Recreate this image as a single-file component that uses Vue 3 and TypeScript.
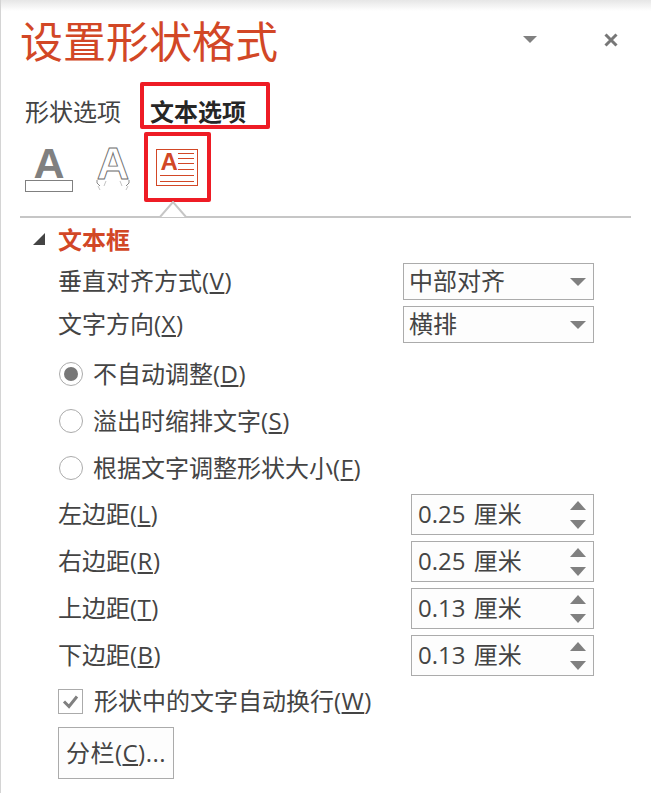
<script setup lang="ts">
const selects = [
  { label: '垂直对齐方式', key: 'V', value: '中部对齐' },
  { label: '文字方向', key: 'X', value: '横排' }
]

const radios = [
  { label: '不自动调整', key: 'D', checked: true },
  { label: '溢出时缩排文字', key: 'S', checked: false },
  { label: '根据文字调整形状大小', key: 'F', checked: false }
]

const spinners = [
  { label: '左边距', key: 'L', value: '0.25 厘米' },
  { label: '右边距', key: 'R', value: '0.25 厘米' },
  { label: '上边距', key: 'T', value: '0.13 厘米' },
  { label: '下边距', key: 'B', value: '0.13 厘米' }
]
</script>

<template>
  <div class="panel">
    <header class="head">
      <h1 class="title">设置形状格式</h1>
      <span class="menu-arrow"></span>
      <svg class="close" width="14" height="14" viewBox="0 0 14 14">
        <path d="M1.5 1.5 12.5 12.5M12.5 1.5 1.5 12.5" stroke="#777" stroke-width="3" fill="none" />
      </svg>
    </header>

    <div class="tabs">
      <span class="tab">形状选项</span>
      <span class="tab active">文本选项<i class="mark mark-tab"></i></span>
    </div>

    <div class="icons">
      <svg class="icon-fill" width="48" height="56" viewBox="0 0 48 56">
        <text x="24" y="42" text-anchor="middle" class="glyph" fill="#808080">A</text>
        <rect x="0.5" y="44.5" width="47" height="11" fill="#fff" stroke="#808080" />
      </svg>
      <svg class="icon-outline" width="34" height="56" viewBox="0 0 34 56">
        <text x="17" y="43" text-anchor="middle" class="glyph outline" fill="#fff" stroke="#6e6e6e" stroke-width="0.9">A</text>
        <path d="M1 44V47L4 50M33 44V47L30 50" stroke="#8a8a8a" fill="none" />
        <path d="M2 50 4 54M32 50 30 54M10 45 8 50M24 45 26 50" stroke="#c4c4c4" fill="none" />
      </svg>
      <div class="icon-box">
        <i class="mark mark-icon"></i>
        <svg width="43" height="38" viewBox="0 0 43 38">
          <rect x="0.5" y="0.5" width="41" height="36" fill="#fff" stroke="#d24726" />
          <text x="4.5" y="21" class="glyph small" fill="#d24726">A</text>
          <path d="M22 4.5H38M22 9.5H38M22 14.5H38M22 20.5H38M4 26.5H38M4 32.5H38" stroke="#d24726" fill="none" />
        </svg>
      </div>
    </div>

    <div class="rule">
      <svg class="notch" width="28" height="17" viewBox="0 0 28 17">
        <path d="M0 16H1L14 1 27 16H28" stroke="#c6c6c6" stroke-width="2" fill="#fff" />
      </svg>
    </div>

    <div class="section">
      <span class="twisty"></span>
      <span class="section-name">文本框</span>
    </div>

    <div class="body">
      <div v-for="row in selects" :key="row.key" class="row select-row">
        <span class="label">{{ row.label }}<span class="hot">(<u>{{ row.key }}</u>)</span></span>
        <div class="select">
          <span class="amount">{{ row.value }}</span>
          <span class="arrow"></span>
        </div>
      </div>

      <div class="radios">
        <label v-for="radio in radios" :key="radio.key" class="radio-row">
          <span :class="['radio', { on: radio.checked }]"></span>
          <span class="label">{{ radio.label }}<span class="hot">(<u>{{ radio.key }}</u>)</span></span>
        </label>
      </div>

      <div class="spinners">
        <div v-for="row in spinners" :key="row.key" class="row spinner-row">
          <span class="label">{{ row.label }}<span class="hot">(<u>{{ row.key }}</u>)</span></span>
          <div class="spinner">
            <span class="amount">{{ row.value }}</span>
            <span class="steps">
              <span class="step up"></span>
              <span class="step down"></span>
            </span>
          </div>
        </div>
      </div>

      <label class="check-row">
        <span class="check">
          <svg width="19" height="17" viewBox="0 0 19 17">
            <path d="M3 8.5 8 13.5 16 3.5" stroke="#808080" stroke-width="3" fill="none" />
          </svg>
        </span>
        <span class="label">形状中的文字自动换行<span class="hot">(<u>W</u>)</span></span>
      </label>

      <button class="columns" type="button">分栏(<u>C</u>)...</button>
    </div>
  </div>
</template>

<style>
html,
body {
  background: #fff;
}
</style>

<style scoped>
.panel {
  box-sizing: border-box;
  width: 651px;
  height: 793px;
  overflow: hidden;
  border-left: 1px solid #d4d4d4;
  background: linear-gradient(#e6e6e6, #fff 11px);
  color: #444;
  font-family: "Open Sans", "Noto Sans CJK SC", sans-serif;
  font-size: 24px;
  line-height: 32px;
}

.head {
  display: flex;
  align-items: center;
  height: 70px;
  padding: 18px 0 0 19px;
}

.title {
  margin: 0;
  width: 503px;
  align-self: flex-start;
  color: #d24726;
  font-size: 43px;
  font-weight: 400;
  line-height: 48px;
}

.menu-arrow {
  align-self: flex-start;
  margin-top: 18px;
  border-left: 7px solid transparent;
  border-right: 7px solid transparent;
  border-top: 7px solid #808080;
}

.close {
  align-self: flex-start;
  margin: 15px 0 0 67px;
}

.tabs {
  display: flex;
  gap: 29px;
  height: 48px;
  padding: 6px 0 0 24px;
  box-sizing: border-box;
  line-height: 36px;
}

.tab {
  position: relative;
  color: #444;
}

.tab.active {
  color: #262626;
  font-weight: 700;
}

.mark {
  position: absolute;
  box-sizing: border-box;
  border: 4px solid #ee1c25;
  border-radius: 2px;
}

.mark-tab {
  left: -10px;
  top: -12px;
  width: 130px;
  height: 47px;
}

.icons {
  display: flex;
  align-items: flex-start;
  height: 80px;
  padding: 10px 0 0 24px;
  box-sizing: border-box;
}

.icon-fill,
.icon-outline {
  margin-top: -10px;
}

.icon-outline {
  margin-left: 23px;
}

.icon-box {
  position: relative;
  margin: 3px 0 0 26px;
}

.icon-box svg {
  display: block;
}

.mark-icon {
  left: -12px;
  top: -17px;
  width: 67px;
  height: 70px;
}

.glyph {
  font-family: "Liberation Sans", sans-serif;
  font-size: 43px;
  font-weight: 700;
}

.glyph.outline {
  font-size: 45px;
}

.glyph.small {
  font-size: 24px;
}

.rule {
  position: relative;
  height: 2px;
  margin: 0 19px;
  width: 611px;
  background: #c6c6c6;
}

.notch {
  position: absolute;
  left: 139px;
  top: -15px;
}

.section {
  display: flex;
  align-items: center;
  height: 32px;
  margin-top: 6px;
  padding-left: 32px;
}

.twisty {
  width: 0;
  height: 0;
  margin-top: -2px;
  border-left: 12px solid transparent;
  border-bottom: 12px solid #444;
}

.section-name {
  margin-left: 13px;
  color: #d24726;
  font-weight: 700;
}

.body {
  padding: 7px 57px 0 57px;
}

.hot {
  letter-spacing: 0.5px;
}

.row {
  display: flex;
  justify-content: space-between;
  align-items: center;
}

.row .label,
.amount {
  margin-bottom: 2px;
}

.select-row {
  margin-bottom: 6px;
}

.select,
.spinner {
  box-sizing: border-box;
  display: flex;
  align-items: center;
  justify-content: space-between;
  background: #fdfdfd;
  border: 1px solid #ababab;
}

.select {
  width: 191px;
  height: 37px;
  padding: 0 7px 0 5px;
}

.arrow {
  border-left: 8px solid transparent;
  border-right: 8px solid transparent;
  border-top: 8px solid #808080;
}

.radios {
  margin-top: 7px;
}

.radio-row {
  display: flex;
  align-items: center;
  gap: 10px;
  height: 47px;
  padding-left: 1px;
}

.radio {
  box-sizing: border-box;
  position: relative;
  width: 24px;
  height: 24px;
  border: 1px solid #ababab;
  border-radius: 50%;
  background: #fff;
}

.radio.on::after {
  content: "";
  position: absolute;
  inset: 4px;
  border-radius: 50%;
  background: #777;
}

.spinners {
  display: flex;
  flex-direction: column;
  gap: 6px;
  margin-top: 3px;
}

.spinner {
  width: 183px;
  height: 41px;
  padding: 0 7px 0 6px;
}

.spinner .amount {
  word-spacing: 2px;
}

.steps {
  display: flex;
  flex-direction: column;
  gap: 10px;
}

.step {
  width: 0;
  height: 0;
  border-left: 8.5px solid transparent;
  border-right: 8.5px solid transparent;
}

.step.up {
  border-bottom: 9px solid #808080;
}

.step.down {
  border-top: 9px solid #808080;
}

.check-row {
  display: flex;
  align-items: center;
  gap: 11px;
  height: 38px;
  margin-top: 6px;
}

.check {
  box-sizing: border-box;
  display: flex;
  align-items: center;
  justify-content: center;
  width: 25px;
  height: 25px;
  border: 1px solid #ababab;
}

.columns {
  display: block;
  box-sizing: border-box;
  width: 116px;
  height: 52px;
  margin: 7px 0 0;
  padding: 0;
  background: #fdfdfd;
  border: 1px solid #ababab;
  color: #444;
  font: inherit;
  letter-spacing: 0.5px;
}
</style>
